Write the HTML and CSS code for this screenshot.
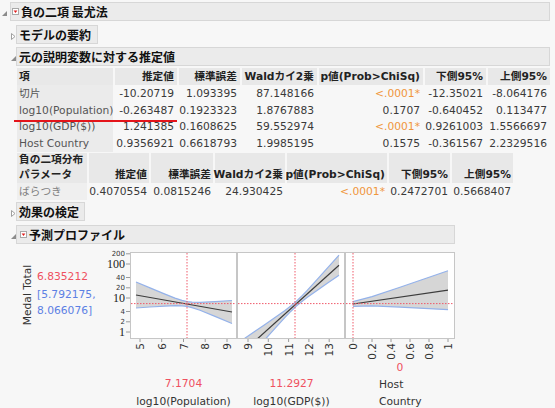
FILE: index.html
```html
<!DOCTYPE html>
<html lang="ja">
<head>
<meta charset="utf-8">
<title>負の二項 最尤法</title>
<link rel="stylesheet" href="styles.css">
</head>
<body>
<div class="report">
  <div class="ohead lvl0">
    <span class="tri"><svg width="5" height="5" viewBox="0 0 5 5"><polygon points="5,0 5,5 0,5" fill="#8c8c8c"/></svg></span>
    <div class="bar w-top"><span class="redicon"><svg width="7" height="7" viewBox="0 0 7 7"><rect x="0.5" y="0.5" width="6" height="6" fill="#fff" stroke="#a8a8a8"/><polygon points="1.6,2.6 5.4,2.6 3.5,4.9" fill="#e01e1e"/></svg></span>負の二項 最尤法</div>
  </div>

  <div class="ohead lvl1 gap4">
    <span class="tri"><svg width="5" height="7" viewBox="0 0 5 7"><polygon points="0.5,0.5 4,3.5 0.5,6.5" fill="#fff" stroke="#a0a0a0"/></svg></span>
    <div class="bar w-model">モデルの要約</div>
  </div>

  <div class="ohead lvl1 gap3">
    <span class="tri"><svg width="5" height="5" viewBox="0 0 5 5"><polygon points="5,0 5,5 0,5" fill="#8c8c8c"/></svg></span>
    <div class="bar w-full">元の説明変数に対する推定値</div>
  </div>

  <div class="tbl t1">
    <div class="c h lab">項</div>
    <div class="c h">推定値</div>
    <div class="c h">標準誤差</div>
    <div class="c h">Waldカイ2乗</div>
    <div class="c h">p値(Prob&gt;ChiSq)</div>
    <div class="c h">下側95%</div>
    <div class="c h">上側95%</div>

    <div class="c l">切片</div>
    <div class="c v">-10.20719</div>
    <div class="c v">1.093395</div>
    <div class="c v">87.148166</div>
    <div class="c v sig">&lt;.0001*</div>
    <div class="c v">-12.35021</div>
    <div class="c v">-8.064176</div>

    <div class="c l">log10(Population)</div>
    <div class="c v">-0.263487</div>
    <div class="c v">0.1923323</div>
    <div class="c v">1.8767883</div>
    <div class="c v">0.1707</div>
    <div class="c v">-0.640452</div>
    <div class="c v">0.113477</div>

    <div class="c l">log10(GDP($))</div>
    <div class="c v">1.241385</div>
    <div class="c v">0.1608625</div>
    <div class="c v">59.552974</div>
    <div class="c v sig">&lt;.0001*</div>
    <div class="c v">0.9261003</div>
    <div class="c v">1.5566697</div>

    <div class="c l">Host Country</div>
    <div class="c v">0.9356921</div>
    <div class="c v">0.6618793</div>
    <div class="c v">1.9985195</div>
    <div class="c v">0.1575</div>
    <div class="c v">-0.361567</div>
    <div class="c v">2.2329516</div>
  </div>

  <div class="tbl t2">
    <div class="c h lab two">負の二項分布<br>パラメータ</div>
    <div class="c h two">推定値</div>
    <div class="c h two">標準誤差</div>
    <div class="c h two">Waldカイ2乗</div>
    <div class="c h two">p値(Prob&gt;ChiSq)</div>
    <div class="c h two">下側95%</div>
    <div class="c h two">上側95%</div>

    <div class="c l light">ばらつき</div>
    <div class="c v">0.4070554</div>
    <div class="c v">0.0815246</div>
    <div class="c v">24.930425</div>
    <div class="c v sig">&lt;.0001*</div>
    <div class="c v">0.2472701</div>
    <div class="c v">0.5668407</div>
  </div>

  <div class="ohead lvl1 gap2">
    <span class="tri"><svg width="5" height="7" viewBox="0 0 5 7"><polygon points="0.5,0.5 4,3.5 0.5,6.5" fill="#fff" stroke="#a0a0a0"/></svg></span>
    <div class="bar w-effect">効果の検定</div>
  </div>

  <div class="ohead lvl1 gap4">
    <span class="tri"><svg width="5" height="5" viewBox="0 0 5 5"><polygon points="5,0 5,5 0,5" fill="#8c8c8c"/></svg></span>
    <div class="bar w-prof"><span class="redicon"><svg width="7" height="7" viewBox="0 0 7 7"><rect x="0.5" y="0.5" width="6" height="6" fill="#fff" stroke="#a8a8a8"/><polygon points="1.6,2.6 5.4,2.6 3.5,4.9" fill="#e01e1e"/></svg></span>予測プロファイル</div>
  </div>

  <svg class="prof" width="555" height="163" viewBox="0 245 555 163">
    <defs>
      <clipPath id="c1"><rect x="131" y="254" width="105" height="85"/></clipPath>
      <clipPath id="c2"><rect x="238" y="254" width="106" height="85"/></clipPath>
      <clipPath id="c3"><rect x="346" y="254" width="108" height="85"/></clipPath>
    </defs>

    <g class="frame">
      <rect x="130.5" y="253.5" width="106" height="86"/>
      <rect x="237.5" y="253.5" width="107" height="86"/>
      <rect x="345.5" y="253.5" width="109" height="86"/>
    </g>

    <!-- plot 1 -->
    <g clip-path="url(#c1)">
      <polygon class="band" points="136,283 150,288.9 165,295.1 175,299.1 182,301.4 187,302.6 192,303.2 200,303.3 215,302.6 232,301.5 232,324.5 215,317.4 200,311.3 192,308.6 187,307.4 182,306.8 175,306.7 165,307.1 150,308 136,309"/>
      <polyline class="ci" points="136,283 150,288.9 165,295.1 175,299.1 182,301.4 187,302.6 192,303.2 200,303.3 215,302.6 232,301.5"/>
      <polyline class="ci" points="136,309 150,308 165,307.1 175,306.7 182,306.8 187,307.4 192,308.6 200,311.3 215,317.4 232,324.5"/>
      <line class="mean" x1="136" y1="296" x2="232" y2="313"/>
      <line class="ref" x1="131" y1="304.6" x2="236" y2="304.6"/>
      <line class="ref" x1="187" y1="254" x2="187" y2="339"/>
    </g>

    <!-- plot 2 -->
    <g clip-path="url(#c2)">
      <polygon class="band" points="244,339.8 255,332.3 265,325.5 275,318.5 285,311.4 291,306.8 296,302.6 301,297.8 307,291.6 317,280.7 328,268.4 339,256.1 339,276.3 328,283.8 317,291.5 307,298.6 301,303.2 296,307.4 291,312.2 285,318.4 275,329.3 265,340.5 255,351.7 244,364"/>
      <polyline class="ci" points="244,339.8 255,332.3 265,325.5 275,318.5 285,311.4 291,306.8 296,302.6 301,297.8 307,291.6 317,280.7 328,268.4 339,256.1"/>
      <polyline class="ci" points="339,276.3 328,283.8 317,291.5 307,298.6 301,303.2 296,307.4 291,312.2 285,318.4 275,329.3 265,340.5 255,351.7 244,364"/>
      <line class="mean" x1="244" y1="351.9" x2="339" y2="266.2"/>
      <line class="ref" x1="238" y1="304.6" x2="344" y2="304.6"/>
      <line class="ref" x1="295" y1="254" x2="295" y2="339"/>
    </g>

    <!-- plot 3 -->
    <g clip-path="url(#c3)">
      <polygon class="band" points="353,302.6 372,297.6 400,288.3 424,280 448,271.7 448,310.7 424,309.4 400,308.1 372,306.8 353,307.4"/>
      <polyline class="ci" points="353,302.6 372,297.6 400,288.3 424,280 448,271.7"/>
      <polyline class="ci" points="353,307.4 372,306.8 400,308.1 424,309.4 448,310.7"/>
      <line class="mean" x1="353" y1="305" x2="448" y2="291.2"/>
      <line class="ref" x1="346" y1="304.6" x2="454" y2="304.6"/>
      <line class="ref" x1="353" y1="254" x2="353" y2="339"/>
    </g>

    <!-- y axis -->
    <g class="tick">
      <line x1="126" y1="254.8" x2="130" y2="254.8"/>
      <line x1="126" y1="265" x2="130" y2="265"/>
      <line x1="126" y1="278.5" x2="130" y2="278.5"/>
      <line x1="126" y1="288.8" x2="130" y2="288.8"/>
      <line x1="126" y1="299" x2="130" y2="299"/>
      <line x1="126" y1="312.5" x2="130" y2="312.5"/>
      <line x1="126" y1="322.8" x2="130" y2="322.8"/>
      <line x1="126" y1="333" x2="130" y2="333"/>
    </g>
    <g class="ysmall">
      <text x="125" y="257.3">200</text>
      <text x="125" y="281">40</text>
      <text x="125" y="291.3">20</text>
      <text x="125" y="315">4</text>
      <text x="125" y="325.3">2</text>
    </g>
    <g class="ybig">
      <text x="125" y="269">100</text>
      <text x="125" y="303">10</text>
      <text x="125" y="337">1</text>
    </g>

    <!-- x axis ticks -->
    <g class="tick">
      <line x1="140" y1="340" x2="140" y2="343"/>
      <line x1="161.7" y1="340" x2="161.7" y2="343"/>
      <line x1="183.5" y1="340" x2="183.5" y2="343"/>
      <line x1="205.2" y1="340" x2="205.2" y2="343"/>
      <line x1="227" y1="340" x2="227" y2="343"/>
      <line x1="248" y1="340" x2="248" y2="343"/>
      <line x1="268.3" y1="340" x2="268.3" y2="343"/>
      <line x1="288.6" y1="340" x2="288.6" y2="343"/>
      <line x1="308.9" y1="340" x2="308.9" y2="343"/>
      <line x1="329.2" y1="340" x2="329.2" y2="343"/>
      <line x1="353" y1="340" x2="353" y2="343"/>
      <line x1="372" y1="340" x2="372" y2="343"/>
      <line x1="391" y1="340" x2="391" y2="343"/>
      <line x1="410" y1="340" x2="410" y2="343"/>
      <line x1="429" y1="340" x2="429" y2="343"/>
      <line x1="448" y1="340" x2="448" y2="343"/>
    </g>
    <g class="xlab">
      <text transform="translate(140,344) rotate(-90)">5</text>
      <text transform="translate(161.7,344) rotate(-90)">6</text>
      <text transform="translate(183.5,344) rotate(-90)">7</text>
      <text transform="translate(205.2,344) rotate(-90)">8</text>
      <text transform="translate(227,344) rotate(-90)">9</text>
      <text transform="translate(248,344) rotate(-90)">9</text>
      <text transform="translate(268.3,344) rotate(-90)">10</text>
      <text transform="translate(288.6,344) rotate(-90)">11</text>
      <text transform="translate(308.9,344) rotate(-90)">12</text>
      <text transform="translate(329.2,344) rotate(-90)">13</text>
      <text transform="translate(353,344) rotate(-90)">0</text>
      <text transform="translate(372,344) rotate(-90)">0.2</text>
      <text transform="translate(391,344) rotate(-90)">0.4</text>
      <text transform="translate(410,344) rotate(-90)">0.6</text>
      <text transform="translate(429,344) rotate(-90)">0.8</text>
      <text transform="translate(448,344) rotate(-90)">1</text>
    </g>

    <!-- labels -->
    <text class="lbl mid" transform="translate(31,296) rotate(-90)">Medal Total</text>
    <text class="lbl red" x="37" y="281">6.835212</text>
    <text class="lbl blue" x="37" y="299">[5.792175,</text>
    <text class="lbl blue" x="37" y="315">8.066076]</text>

    <text class="lbl red mid" x="183.5" y="388">7.1704</text>
    <text class="lbl mid" x="183.5" y="406">log10(Population)</text>
    <text class="lbl red mid" x="291.5" y="388">11.2927</text>
    <text class="lbl mid" x="291.5" y="406">log10(GDP($))</text>
    <text class="lbl red mid" x="400" y="372">0</text>
    <text class="lbl" x="379" y="389">Host</text>
    <text class="lbl" x="379" y="406">Country</text>
  </svg>

  <div class="mark"></div>
</div>
</body>
</html>
```

FILE: styles.css
```css
html, body {
  margin: 0;
  padding: 0;
  background: #f7f7f7;
  overflow: hidden;
}

.report {
  position: relative;
  width: 555px;
  height: 408px;
  font-family: "DejaVu Sans", "Noto Sans CJK JP", sans-serif;
  color: #333;
}

/* outline headers */
.ohead {
  display: flex;
  align-items: center;
  height: 19px;
}
.ohead.lvl0 { margin-top: 2px; padding-left: 2px; }
.ohead.lvl1 { padding-left: 11px; }
.gap2 { margin-top: 2px; }
.gap3 { margin-top: 3px; }
.gap4 { margin-top: 4px; }

.tri {
  display: flex;
  align-items: center;
  width: 5px;
  height: 19px;
  padding-top: 3px;
  box-sizing: border-box;
}
.lvl0 .tri { width: 8px; }

.bar {
  box-sizing: border-box;
  height: 19px;
  display: flex;
  align-items: center;
  background: #ebebeb;
  border: 1px solid #d7d7d7;
  padding-left: 2px;
  font-family: "Noto Sans CJK JP", sans-serif;
  font-weight: 700;
  font-size: 12px;
  color: #111;
  white-space: nowrap;
}
.w-top { width: 540px; padding-left: 1px; }
.w-full { width: 534px; }
.w-model { width: 82px; }
.w-effect { width: 69px; }
.w-prof { width: 439px; padding-left: 3px; }

.redicon {
  display: flex;
  width: 7px;
  height: 7px;
  margin-right: 2px;
}

/* tables */
.tbl {
  display: grid;
  column-gap: 2px;
  margin-left: 17px;
  font-size: 10.7px;
}
.t1 {
  margin-top: 2px;
  grid-template-columns: 96px 62px 61px 75px 104px 61px 62px;
  grid-template-rows: 17px repeat(4, 16.75px);
}
.t2 {
  margin-top: 1px;
  grid-template-columns: 70px 60px 62px 70px 100px 61px 61px;
  grid-template-rows: 30px 17px;
}

.c {
  display: flex;
  align-items: center;
  justify-content: flex-end;
  padding-right: 3px;
  white-space: nowrap;
  line-height: 15px;
}
.t2 .c { padding-right: 2px; }

.h {
  background: #e8e8e8;
  font-weight: 700;
  color: #222;
}
.h.two { align-items: flex-end; padding-bottom: 1px; }
.h.lab { justify-content: flex-start; padding-left: 2px; }

.l {
  background: #ebebeb;
  justify-content: flex-start;
  padding-left: 2px;
  color: #555;
}
.l.light { color: #808080; background: #efefef; }

.v { color: #3a3a3a; }
.sig { color: #f0963c; }

/* profiler */
.prof {
  display: block;
}
.frame rect {
  fill: #fff;
  stroke: #c6c6c6;
  stroke-width: 1;
}
.band { fill: #d6d6d6; stroke: none; }
.ci { fill: none; stroke: #94b2ea; stroke-width: 1.2; }
.mean { stroke: #3c3c3c; stroke-width: 1.2; }
.ref { stroke: #ef5a6a; stroke-width: 1; stroke-dasharray: 1.5 1.5; }
.tick line { stroke: #9a9a9a; stroke-width: 1; }

.ysmall text {
  font-family: "DejaVu Sans", sans-serif;
  font-size: 7px;
  fill: #333;
  text-anchor: end;
}
.ybig text {
  font-family: "Liberation Serif", serif;
  font-size: 12px;
  fill: #222;
  text-anchor: end;
}
.xlab text {
  font-family: "DejaVu Sans", sans-serif;
  font-size: 10.5px;
  fill: #333;
  text-anchor: end;
  dominant-baseline: central;
}
.lbl {
  font-family: "DejaVu Sans", sans-serif;
  font-size: 10.7px;
  fill: #333;
}
.lbl.mid { text-anchor: middle; }
.lbl.red { fill: #ef5060; }
.lbl.blue { fill: #5c80e4; }

/* hand-drawn red underline annotation */
.mark {
  position: absolute;
  left: 14px;
  top: 118px;
  width: 163px;
  height: 2px;
  background: #e4141a;
}
```
